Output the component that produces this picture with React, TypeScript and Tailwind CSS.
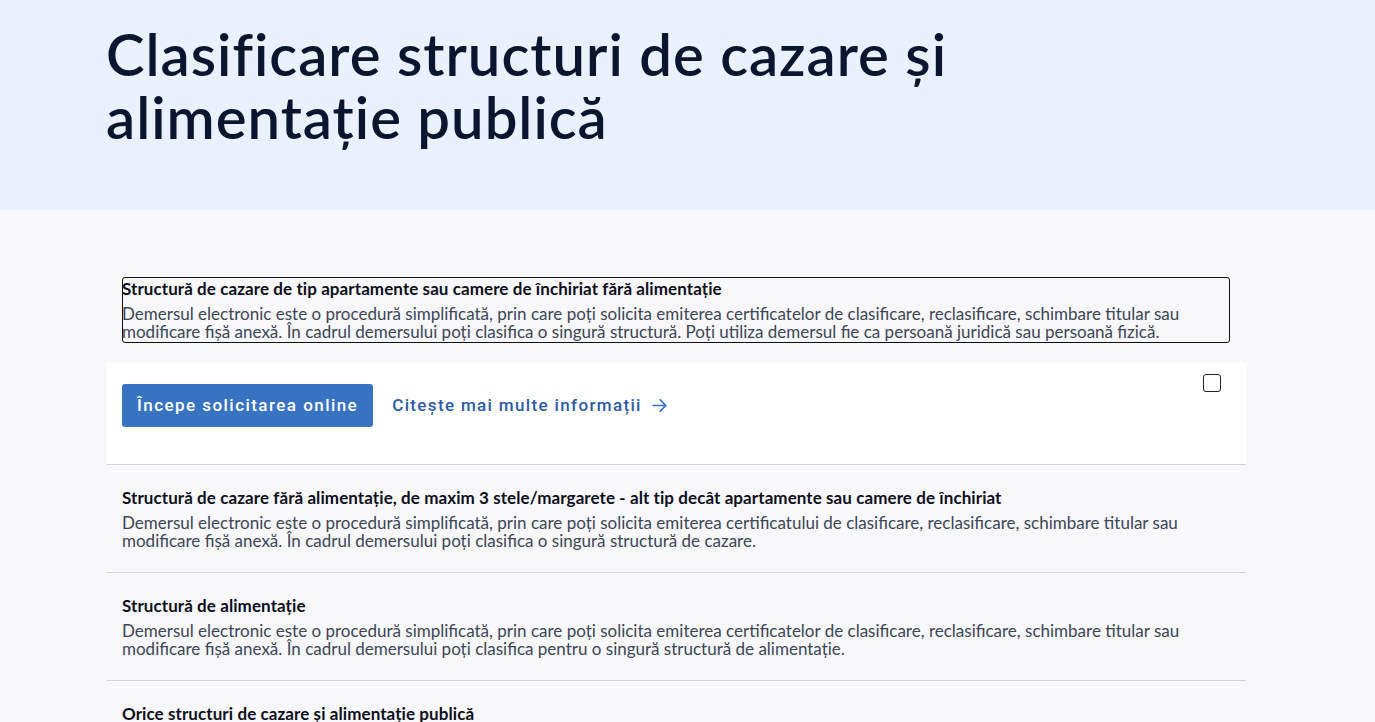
import React from "react";

type Item = { title: string; text: string[] };

const items: Item[] = [
  {
    title: "Structură de cazare fără alimentație, de maxim 3 stele/margarete - alt tip decât apartamente sau camere de închiriat",
    text: [
      "Demersul electronic este o procedură simplificată, prin care poți solicita emiterea certificatului de clasificare, reclasificare, schimbare titular sau",
      "modificare fișă anexă. În cadrul demersului poți clasifica o singură structură de cazare.",
    ],
  },
  {
    title: "Structură de alimentație",
    text: [
      "Demersul electronic este o procedură simplificată, prin care poți solicita emiterea certificatelor de clasificare, reclasificare, schimbare titular sau",
      "modificare fișă anexă. În cadrul demersului poți clasifica pentru o singură structură de alimentație.",
    ],
  },
  {
    title: "Orice structuri de cazare și alimentație publică",
    text: [
      "Demersul electronic este o procedură simplificată, prin care poți solicita emiterea certificatelor de clasificare, reclasificare, schimbare titular sau",
      "modificare fișă anexă. Poți clasifica mai multe structuri în cadrul aceluiași demers.",
    ],
  },
];

function AccordionBody({ item }: { item: Item }) {
  return (
    <div className="pl-[15px] pr-4">
      <div className="text-[17px] font-bold leading-[22px] tracking-[0.08px] text-[#0d0f1c]">{item.title}</div>
      <div className="mt-[5px] text-[17px] leading-[18px] text-[#3b4656]">
        {item.text.map((t) => (
          <div key={t}>{t}</div>
        ))}
      </div>
    </div>
  );
}

export default function App() {
  return (
    <div className="min-h-screen bg-[#f8f8fb] font-['Lato',sans-serif]">
      <header className="bg-[#e8f1fc] h-[210px] pl-[106px] pt-[22px]">
        <h1 className="text-[58px] leading-[63px] font-semibold text-[#0a1530] tracking-[1px]">
          Clasificare structuri de cazare și
          <br />
          alimentație publică
        </h1>
      </header>

      <main className="mx-[107px] w-[1139px] pt-[67px]">
        {/* open item */}
        <section>
          <div className="ml-[15px] mr-4 rounded-[3px] border border-[#111] text-left">
            <div className="text-[17px] font-bold leading-[22px] tracking-[0.08px] text-[#0d0f1c] -ml-px">
              Structură de cazare de tip apartamente sau camere de închiriat fără alimentație
            </div>
            <div className="mt-[5px] text-[17px] leading-[18px] text-[#3b4656] -ml-px pb-[1px]">
              <div>
                Demersul electronic este o procedură simplificată, prin care poți solicita emiterea certificatelor de clasificare, reclasificare, schimbare titular sau
              </div>
              <div>
                modificare fișă anexă. În cadrul demersului poți clasifica o singură structură. Poți utiliza demersul fie ca persoană juridică sau persoană fizică.
              </div>
            </div>
          </div>
          <div className="mt-[20px] bg-white border-b border-[#cfcfd4] flex items-start pl-[15px] pr-[25px] pt-[21px] pb-[37px]">
            <button className="h-[43px] px-[15px] rounded-[3px] bg-[#3873c2] text-white text-[17px] font-['Roboto',sans-serif] font-medium tracking-[1.45px]">
              Începe solicitarea online
            </button>
            <a className="ml-[19px] mt-[9px] flex items-center text-[17px] font-['Roboto',sans-serif] font-medium tracking-[1.35px] text-[#2c5ba3]">
              Citește mai multe informații
              <svg className="ml-[8px]" width="19" height="19" viewBox="0 0 24 24" fill="none" stroke="#3a73c2" strokeWidth="2.2" strokeLinecap="round" strokeLinejoin="round">
                <path d="M4 12h16M13 5l7 7-7 7" />
              </svg>
            </a>
            <div className="ml-auto -mt-[10px] w-[18px] h-[18px] rounded-[3px] border-[1.5px] border-[#222]" />
          </div>
        </section>

        {items.map((it) => (
          <section key={it.title} className="border-b border-[#cfcfd4] pt-[22px] pb-[22px]">
            <AccordionBody item={it} />
          </section>
        ))}
      </main>
    </div>
  );
}
